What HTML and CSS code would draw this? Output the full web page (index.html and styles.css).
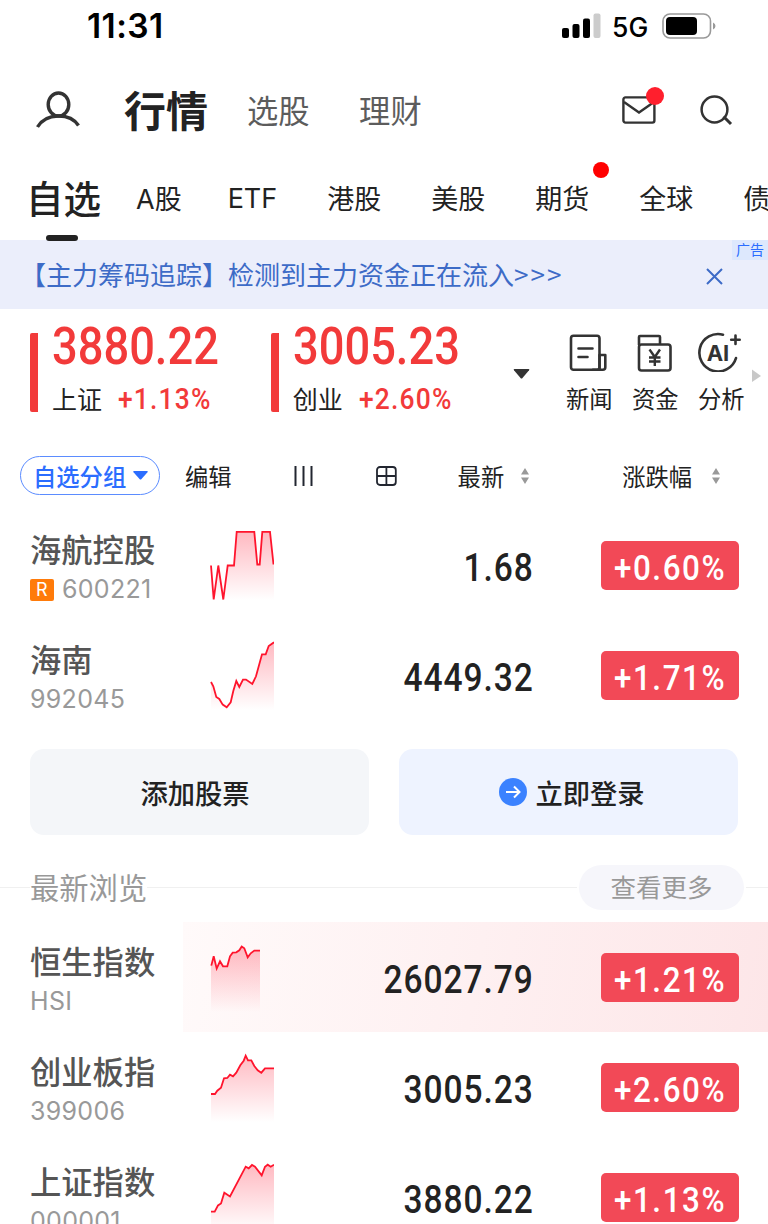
FILE: index.html
```html
<!DOCTYPE html>
<html lang="zh-CN">
  <head>
    <meta charset="UTF-8" />
    <meta name="viewport" content="width=device-width, initial-scale=1.0" />
    <title>行情</title>
    <link rel="stylesheet" href="styles.css" />
  </head>
  <body>
    <div class="statusBar">
      <span class="time">11:31</span>
      <svg class="signal" width="40" height="26" viewBox="0 0 40 26">
        <rect x="1" y="15" width="7" height="10" rx="2" />
        <rect x="11.5" y="11" width="7" height="14" rx="2" />
        <rect x="22" y="5.500" width="7" height="19.500" rx="2" />
        <rect x="32.500" y="0.500" width="7" height="24.500" rx="2" fill="#ccc" />
      </svg>
      <span class="network">5G</span>
      <svg class="battery" width="55" height="26" viewBox="0 0 55 26">
        <rect x="1" y="1" width="47.500" height="24" rx="7" fill="none" stroke="#999" stroke-width="1.600" />
        <rect x="4" y="4" width="31" height="18" rx="4" />
        <path d="M51 9.500v7q2.500-1 2.500-3.500t-2.500-3.500z" fill="#999" />
      </svg>
    </div>

    <header class="topNav">
      <svg class="userIcon" width="44" height="38" viewBox="0 0 44 38" fill="none" stroke="#333" stroke-width="3.400">
        <ellipse cx="22.500" cy="13.500" rx="10.300" ry="11.500" />
        <path d="M1.500 36C10 21.500 34 21.500 42.500 34.500" />
      </svg>
      <h1>行情</h1>
      <a class="topLink">选股</a>
      <a class="topLink">理财</a>
      <div class="mail">
        <svg width="34" height="28" viewBox="0 0 34 28" fill="none" stroke="#333" stroke-width="2.400">
          <rect x="1.400" y="1.400" width="31" height="25.200" rx="2" />
          <path d="M2 6l15 10.500L32 6" />
        </svg>
        <i class="mailDot"></i>
      </div>
      <svg class="searchIcon" width="33" height="31" viewBox="0 0 33 31" fill="none" stroke="#333" stroke-width="2.500">
        <circle cx="14.500" cy="14.500" r="12.900" />
        <path d="M23.500 21.500l7.500 7.500" stroke-width="3" />
      </svg>
    </header>

    <nav class="tabs">
      <a class="tab active">自选</a>
      <a class="tab tabA">A股</a>
      <a class="tab tabEtf">ETF</a>
      <a class="tab">港股</a>
      <a class="tab">美股</a>
      <a class="tab dotted">期货</a>
      <a class="tab">全球</a>
      <a class="tab">债</a>
    </nav>

    <div class="banner">
      <span class="bannerText">【主力筹码追踪】检测到主力资金正在流入<span class="arrows">&gt;&gt;&gt;</span></span>
      <svg class="closeIcon" width="17" height="17" viewBox="0 0 17 17" fill="none" stroke="#3d6bc7" stroke-width="2">
        <path d="M1 1l15 15M16 1L1 16" />
      </svg>
      <span class="adTag">广告</span>
    </div>

    <section class="summary">
      <div class="index">
        <div class="indexValue"><span>3880.22</span></div>
        <div class="indexInfo">上证<span>+1.13%</span></div>
      </div>
      <div class="index">
        <div class="indexValue"><span>3005.23</span></div>
        <div class="indexInfo">创业<span>+2.60%</span></div>
      </div>
      <svg class="caret" width="17" height="10" viewBox="0 0 17 10"><path d="M1.500 0h14q1.500 0 .5 1.300L9.500 9q-1 1-2 0L1 1.300Q0 0 1.500 0z" fill="#333" /></svg>
      <div class="tools">
        <div class="tool">
          <svg width="42" height="44" viewBox="0 0 42 44" fill="none" stroke="#333" stroke-width="2.600" stroke-linejoin="round">
            <rect x="5" y="7.800" width="28.500" height="34" rx="2.500" />
            <path d="M33.500 27h5.800v12.300q0 2.500-2.500 2.500H27M33.500 27v14M12.500 20.500h14M12.500 29h9" stroke-linecap="round" />
          </svg>
          <span>新闻</span>
        </div>
        <div class="tool">
          <svg width="42" height="44" viewBox="0 0 42 44" fill="none" stroke="#333" stroke-width="2.600" stroke-linejoin="round">
            <path d="M7 17V9q0-1 1-1h19q1 0 1 1v7.500" />
            <rect x="7" y="16.500" width="31.500" height="26" rx="2.500" />
            <path d="M17.500 21.500l5.300 7.500L28 21.500M22.800 29v9M17 29.500h11.500M17 33.500h11.500" stroke-width="2.400" />
          </svg>
          <span>资金</span>
        </div>
        <div class="tool">
          <svg width="46" height="44" viewBox="0 0 46 44" fill="none" stroke="#333" stroke-width="2.600" stroke-linecap="round">
            <path d="M25 6.700A18.700 18.700 0 1 0 38 30.100" />
            <path d="M37.500 7.500V16M33.200 11.700h8.500" />
            <text class="aiText" x="20" y="33" text-anchor="middle">AI</text>
          </svg>
          <span>分析</span>
        </div>
      </div>
      <svg class="more" width="9" height="14" viewBox="0 0 9 14"><path d="M0 0.500L9 7 0 13z" fill="#c8c8c8" /></svg>
    </section>

    <section class="toolbar">
      <button class="groupBtn" type="button">
        自选分组
        <svg width="15" height="9" viewBox="0 0 15 9"><path d="M1 0h13q1.500 0 .5 1.300L8.500 8q-1 1-2 0L.5 1.300Q-.5 0 1 0z" fill="#2b6dff" /></svg>
      </button>
      <span class="edit">编辑</span>
      <svg class="listIcon" width="19" height="20" viewBox="0 0 19 20" stroke="#222630" stroke-width="2"><path d="M1.500 0v20M9.500 0v20M17.500 0v20" /></svg>
      <svg class="gridIcon" width="21" height="20" viewBox="0 0 21 20" fill="none" stroke="#222630" stroke-width="1.800">
        <rect x="1" y="1" width="18.800" height="18" rx="3" />
        <path d="M10.400 1v18M1 10h19" />
      </svg>
      <span class="latest">最新</span>
      <svg class="sort" width="8" height="16" viewBox="0 0 8 16" fill="#999"><path d="M4 0l4 6.500H0zM0 9.500h8l-4 6.500z" /></svg>
      <span class="change">涨跌幅</span>
      <svg class="sort" width="8" height="16" viewBox="0 0 8 16" fill="#999"><path d="M4 0l4 6.500H0zM0 9.500h8l-4 6.500z" /></svg>
    </section>

    <svg class="defs" width="0" height="0">
      <linearGradient id="fade" gradientUnits="userSpaceOnUse" x1="0" y1="21" x2="0" y2="89">
        <stop offset="0" stop-color="#ff3048" stop-opacity="0.340" />
        <stop offset="1" stop-color="#ff3048" stop-opacity="0" />
      </linearGradient>
    </svg>

    <section class="stocks">
      <div class="stock">
        <div>
          <div class="name">海航控股</div>
          <div class="code"><i class="flag">R</i>600221</div>
        </div>
        <svg class="spark" width="64" height="110" viewBox="0 0 64 110">
          <path class="area" d="M1 54.500L3.700 89 8.300 54.500 13.300 89 17.700 54.500H24L26.700 20.800H44.300L47.300 53.500H49.700L52.300 20.800H60L64 56V89H1z" />
          <polyline class="line" points="1,54.500 3.700,88.500 8.300,54.500 13.300,88.500 17.700,54.500 24,54.500 26.700,20.800 44.300,20.800 47.300,53.500 49.700,53.500 52.300,20.800 60,20.800 63.500,53.500" />
        </svg>
        <div class="price"><span>1.68</span></div>
        <div class="badge"><span>+0.60%</span></div>
      </div>
      <div class="stock">
        <div>
          <div class="name">海南</div>
          <div class="code">992045</div>
        </div>
        <svg class="spark" width="64" height="110" viewBox="0 0 64 110">
          <path class="area" d="M1 61L3.300 65.300 6.300 76 9.300 78 12.700 83.600 16.700 86.300 20.700 81.300 23.300 70 26.300 60 29.300 66 33 58.600H36L42.300 63 46 55.300 52 33.300H55.700L58.700 25 64 21.300V89H1z" />
          <polyline class="line" points="1,61 3.300,65.300 6.300,76 9.300,78 12.700,83.600 16.700,86.300 20.700,81.300 23.300,70 26.300,60 29.300,66 33,58.600 36,58.600 42.300,63 46,55.300 52,33.300 55.700,33.300 58.700,25 64,21.300" />
        </svg>
        <div class="price"><span>4449.32</span></div>
        <div class="badge"><span>+1.71%</span></div>
      </div>
    </section>

    <div class="actions">
      <button class="action add" type="button">添加股票</button>
      <button class="action login" type="button">
        <svg width="28" height="28" viewBox="0 0 28 28" fill="none" stroke="#fff" stroke-width="2">
          <circle cx="14" cy="14" r="14" fill="#3b82ff" stroke="none" />
          <path d="M7 14h13M15 8.500l5.500 5.500-5.500 5.500" />
        </svg>
        立即登录
      </button>
    </div>

    <div class="recent">
      <span class="rule first"></span>
      <h2>最新浏览</h2>
      <span class="rule"></span>
      <a class="moreBtn">查看更多</a>
      <span class="rule last"></span>
    </div>

    <section class="stocks">
      <div class="stock highlight">
        <div>
          <div class="name">恒生指数</div>
          <div class="code">HSI</div>
        </div>
        <svg class="spark" width="64" height="110" viewBox="0 0 64 110">
          <path class="area" d="M1 42.600L3.700 33.300 6.700 45.600 10 38.300 13 43.300H17.300L20 33.300 22.700 29.600 26.300 29.300 29.300 27.300 31.700 23.600 34.300 25.300 37.700 34.300 40.700 30.300 44.300 27.600H50V89H1z" />
          <polyline class="line" points="1.300,42.600 3.700,33.300 6.700,45.600 10,38.300 13,43.300 17.300,43.300 20,33.300 22.700,29.600 26.300,29.300 29.300,27.300 31.700,23.600 34.300,25.300 37.700,34.300 40.700,30.300 44.300,27.600 50,27.600" />
        </svg>
        <div class="price"><span>26027.79</span></div>
        <div class="badge"><span>+1.21%</span></div>
      </div>
      <div class="stock">
        <div>
          <div class="name">创业板指</div>
          <div class="code">399006</div>
        </div>
        <svg class="spark" width="64" height="110" viewBox="0 0 64 110">
          <path class="area" d="M1 61H5L7.300 57.700 11 54.700 14 45.300 17.300 45 20 41.700 23 43.300 26.300 39.700 30.300 32.300 33.700 27.700 35.700 22.700 38 27.300H41.300L44.300 33 47.700 37.300 51.300 39.700 55 35.300H64V89H1z" />
          <polyline class="line" points="1,61 5,61 7.300,57.700 11,54.700 14,45.300 17.300,45 20,41.700 23,43.300 26.300,39.700 30.300,32.300 33.700,27.700 35.700,22.700 38,27.300 41.300,27.300 44.300,33 47.700,37.300 51.300,39.700 55,35.300 64,35.300" />
        </svg>
        <div class="price"><span>3005.23</span></div>
        <div class="badge"><span>+2.60%</span></div>
      </div>
      <div class="stock">
        <div>
          <div class="name">上证指数</div>
          <div class="code">000001</div>
        </div>
        <svg class="spark" width="64" height="110" viewBox="0 0 64 110">
          <path class="area" d="M1 68.700H4.700L8 62.400 11 60.400 14.300 49.700 20 53.400 35.700 23.700 38.700 25.400 42 22 45 23.700 51.700 32.400 55 23.700 57.700 21.700 60.700 23.700 64 21.700V89H1z" />
          <polyline class="line" points="1,68.700 4.700,68.700 8,62.400 11,60.400 14.300,49.700 20,53.400 35.700,23.700 38.700,25.400 42,22 45,23.700 51.700,32.400 55,23.700 57.700,21.700 60.700,23.700 64,21.700" />
        </svg>
        <div class="price"><span>3880.22</span></div>
        <div class="badge"><span>+1.13%</span></div>
      </div>
    </section>
  </body>
</html>
```
FILE: styles.css
```css
* {
  box-sizing: border-box;
}
body {
  margin: 0;
  height: 1224px;
  overflow: hidden;
  background: #fff;
  color: #222;
  font-family: "Noto Sans CJK SC", sans-serif;
  white-space: nowrap;
}
svg {
  display: block;
  flex: none;
}
.defs {
  position: absolute;
}
button {
  border: 0;
  padding: 0;
  font-family: inherit;
  color: inherit;
}

/* status bar */
.statusBar {
  display: flex;
  align-items: center;
  height: 52px;
  padding: 0 51px 0 87px;
  color: #000;
  font-family: Inter, sans-serif;
}
.time {
  font-size: 33.500px;
  font-weight: 600;
  letter-spacing: 0.400px;
}
.signal {
  margin-left: auto;
}
.network {
  width: 37px;
  margin: 2px 13px 0 11px;
  font-size: 26.500px;
  font-weight: 500;
}

/* header */
.topNav {
  display: flex;
  align-items: center;
  height: 116px;
  padding: 0 35px 0 36px;
}
.topNav h1 {
  width: 84px;
  margin: -4px 39px 0 44px;
  font-size: 42px;
  font-weight: 700;
}
.topLink {
  margin: -2px 49.500px 0 0;
  font-size: 31.300px;
  font-weight: 400;
  color: #5c5c5c;
}
.mail {
  position: relative;
  margin: 0 44px 0 auto;
}
.mailDot {
  position: absolute;
  top: -9px;
  right: -8px;
  width: 18px;
  height: 18px;
  border-radius: 50%;
  background: #ff1f2d;
}

/* market tabs */
.tabs {
  position: relative;
  z-index: 1;
  display: flex;
  align-items: center;
  gap: 50px;
  height: 72px;
  padding-left: 26px;
}
.tab {
  position: relative;
  flex: none;
  margin-top: -14px;
  font-size: 27px;
  font-weight: 400;
}
.tab.active {
  margin-top: -16px;
  margin-right: -15px;
  font-size: 37.500px;
  font-weight: 500;
}
.tab.active::after {
  content: "";
  position: absolute;
  left: 20px;
  bottom: -17px;
  width: 32px;
  height: 6px;
  border-radius: 3px;
  background: #222;
}
.tabA {
  margin-right: -4px;
}
.tabA,
.tabEtf {
  font-family: Inter, "Noto Sans CJK SC", sans-serif;
}
.tabEtf {
  margin-top: -12px;
}
.dotted::after {
  content: "";
  position: absolute;
  top: -16px;
  right: -20px;
  width: 16px;
  height: 16px;
  border-radius: 50%;
  background: #f00;
}

/* ad banner */
.banner {
  position: relative;
  display: flex;
  align-items: center;
  justify-content: space-between;
  height: 69px;
  padding: 0 45px 0 20px;
  background: #ebeefb;
  color: #3d6bc7;
}
.bannerText {
  font-size: 26px;
  margin-top: -3px;
}
.arrows {
  letter-spacing: 2px;
}
.closeIcon {
  margin-top: 3px;
}
.adTag {
  position: absolute;
  top: 0;
  right: 0;
  width: 36px;
  height: 20px;
  background: #dde8fd;
  color: #2b6dff;
  font-size: 14px;
  line-height: 18px;
  text-align: center;
}

/* index summary */
.summary {
  display: flex;
  height: 134px;
  padding: 0 7px 0 30px;
}
.index {
  width: 241px;
  height: 79px;
  margin-top: 24px;
  padding-left: 14px;
  border-left: 8px solid #f23a3a;
  border-radius: 2px;
}
.indexValue {
  height: 53px;
  color: #f23a3a;
  font: 500 52px/27px Roboto, sans-serif;
}
/* squeeze Roboto to the proportions of a DIN numeral */
.indexValue span,
.indexInfo span,
.price span,
.badge span {
  display: inline-block;
  transform: scaleX(0.87);
  transform-origin: left;
  letter-spacing: 0;
}
.indexInfo {
  height: 26px;
  font-size: 25px;
  line-height: 25px;
}
.indexInfo span {
  margin-left: 16px;
  color: #f23a3a;
  font: 500 29px/27px Roboto, sans-serif;
  transform: scaleX(0.91);
  letter-spacing: 1.300px;
}
.caret {
  margin: 60px 0 0 1px;
}
.tools {
  display: flex;
  gap: 20px;
  margin: 19px 0 0 36.500px;
}
.tool {
  width: 46px;
  font-size: 23.300px;
  line-height: 52px;
}
.aiText {
  fill: #333;
  stroke: none;
  font: 700 22px Inter, sans-serif;
}
.more {
  margin: 60px 0 0 8px;
}

/* table toolbar */
.toolbar {
  display: flex;
  align-items: center;
  height: 67px;
  padding: 0 0 2px 20px;
  font-size: 23.300px;
}
.groupBtn {
  display: flex;
  align-items: center;
  gap: 7px;
  width: 140px;
  height: 39px;
  padding-left: 12px;
  border: 1.500px solid #5b8cff;
  border-radius: 20px;
  background: #fff;
  color: #2b6dff;
  font-size: 23.300px;
  font-weight: 500;
}
.edit {
  margin-left: 25px;
}
.listIcon {
  margin-left: 62px;
}
.gridIcon {
  margin-left: 63px;
}
.latest {
  margin-left: 61px;
}
.change {
  margin-left: 93px;
}
.sort {
  margin-left: 17px;
}
.change + .sort {
  margin-left: 20px;
}

/* stock rows */
.stock {
  display: grid;
  grid-template-columns: 180px 64px 259px 1fr;
  height: 110.300px;
  padding-left: 30px;
}
.highlight {
  background: linear-gradient(100deg, #fffafa, #fde6e8) no-repeat 183px 0 / 585px 100%;
}
.name {
  margin-top: 17px;
  color: #555;
  font-size: 31.300px;
  font-weight: 500;
  line-height: 44px;
}
.code {
  display: flex;
  align-items: center;
  height: 36px;
  color: #999;
  font-family: Inter, sans-serif;
  font-size: 25px;
  letter-spacing: 0.300px;
}
.flag {
  width: 24px;
  height: 22px;
  margin: 2px 8px 0 0;
  border-radius: 2px;
  background: #ff7b0a;
  color: #fff;
  font-size: 18px;
  font-style: normal;
  line-height: 22px;
  text-align: center;
}
.spark {
  margin-top: 1px;
}
.area {
  fill: url(#fade);
}
.line {
  fill: none;
  stroke: #ff142d;
  stroke-width: 1.800;
}
.price {
  font: 500 38.500px/116px Roboto, sans-serif;
  text-align: right;
}
.price span {
  margin-right: -1px;
  transform-origin: right;
  letter-spacing: 1.100px;
}
.badge {
  width: 137.500px;
  height: 49px;
  margin: 31px 0 0 68px;
  border-radius: 5px;
  background: #f24957;
  color: #fff;
  font: 500 34.500px/54px Roboto, sans-serif;
}
.badge span {
  margin-left: 13px;
  transform: scaleX(0.91);
  letter-spacing: 1.700px;
}

/* buttons */
.actions {
  display: flex;
  gap: 30px;
  padding: 18px 30px 0;
}
.action {
  display: flex;
  align-items: center;
  justify-content: center;
  gap: 8px;
  width: 339px;
  height: 86px;
  border-radius: 14px;
  font-size: 27.300px;
  font-weight: 500;
}
.add {
  padding-right: 9px;
  background: #f4f6f9;
}
.login {
  padding-left: 7px;
  background: #eef3ff;
}

/* recently viewed */
.recent {
  display: flex;
  align-items: center;
  height: 87px;
  padding-top: 18px;
}
.recent h2 {
  margin: -2px 0 0;
  color: #999;
  font-size: 29.300px;
  font-weight: 400;
}
.rule {
  flex: 1;
  height: 1px;
  background: #f0f0f0;
}
.first {
  flex: none;
  width: 30px;
}
.moreBtn {
  width: 165px;
  height: 45px;
  margin: 0 2px;
  border-radius: 23px;
  background: #f6f6fb;
  color: #999;
  font-size: 25.500px;
  line-height: 42px;
  text-align: center;
}
.last {
  flex: none;
  width: 22px;
}
```
